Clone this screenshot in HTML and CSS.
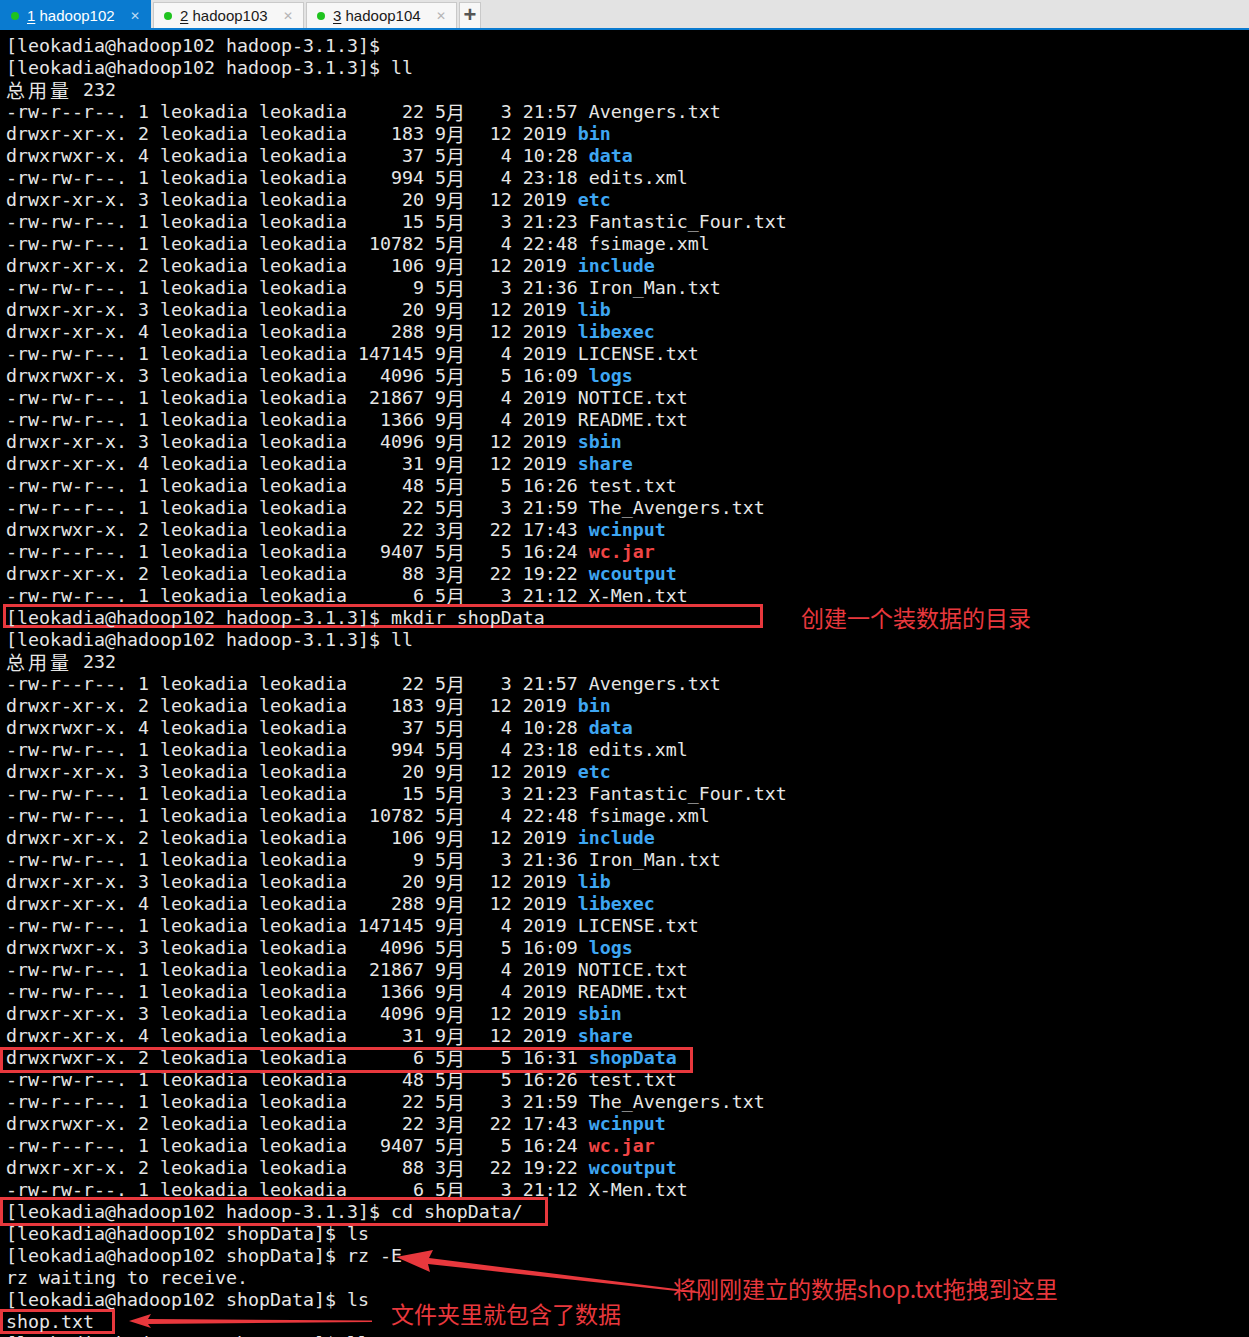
FILE: index.html
```html
<!DOCTYPE html>
<html>
<head>
  <title>Xshell - hadoop102</title>
  <link rel="stylesheet" href="styles.css">
</head>
<body>
  <div class="tabs">
    <div class="tab active"><span class="dot"></span><span class="lbl"><u>1</u> hadoop102</span><span class="x">&#x2715;</span></div>
    <div class="tab"><span class="dot"></span><span class="lbl"><u>2</u> hadoop103</span><span class="x">&#x2715;</span></div>
    <div class="tab"><span class="dot"></span><span class="lbl"><u>3</u> hadoop104</span><span class="x">&#x2715;</span></div>
    <div class="add">+</div>
  </div>

  <div class="term">
<div class="ln">[leokadia@hadoop102 hadoop-3.1.3]$</div>
<div class="ln">[leokadia@hadoop102 hadoop-3.1.3]$ ll</div>
<div class="ln"><span class="w">总</span><span class="w">用</span><span class="w">量</span> 232</div>
<div class="ln">-rw-r--r--. 1 leokadia leokadia     22 5<span class="w">月</span>   3 21:57 Avengers.txt</div>
<div class="ln">drwxr-xr-x. 2 leokadia leokadia    183 9<span class="w">月</span>  12 2019 <span class="d">bin</span></div>
<div class="ln">drwxrwxr-x. 4 leokadia leokadia     37 5<span class="w">月</span>   4 10:28 <span class="d">data</span></div>
<div class="ln">-rw-rw-r--. 1 leokadia leokadia    994 5<span class="w">月</span>   4 23:18 edits.xml</div>
<div class="ln">drwxr-xr-x. 3 leokadia leokadia     20 9<span class="w">月</span>  12 2019 <span class="d">etc</span></div>
<div class="ln">-rw-rw-r--. 1 leokadia leokadia     15 5<span class="w">月</span>   3 21:23 Fantastic_Four.txt</div>
<div class="ln">-rw-rw-r--. 1 leokadia leokadia  10782 5<span class="w">月</span>   4 22:48 fsimage.xml</div>
<div class="ln">drwxr-xr-x. 2 leokadia leokadia    106 9<span class="w">月</span>  12 2019 <span class="d">include</span></div>
<div class="ln">-rw-rw-r--. 1 leokadia leokadia      9 5<span class="w">月</span>   3 21:36 Iron_Man.txt</div>
<div class="ln">drwxr-xr-x. 3 leokadia leokadia     20 9<span class="w">月</span>  12 2019 <span class="d">lib</span></div>
<div class="ln">drwxr-xr-x. 4 leokadia leokadia    288 9<span class="w">月</span>  12 2019 <span class="d">libexec</span></div>
<div class="ln">-rw-rw-r--. 1 leokadia leokadia 147145 9<span class="w">月</span>   4 2019 LICENSE.txt</div>
<div class="ln">drwxrwxr-x. 3 leokadia leokadia   4096 5<span class="w">月</span>   5 16:09 <span class="d">logs</span></div>
<div class="ln">-rw-rw-r--. 1 leokadia leokadia  21867 9<span class="w">月</span>   4 2019 NOTICE.txt</div>
<div class="ln">-rw-rw-r--. 1 leokadia leokadia   1366 9<span class="w">月</span>   4 2019 README.txt</div>
<div class="ln">drwxr-xr-x. 3 leokadia leokadia   4096 9<span class="w">月</span>  12 2019 <span class="d">sbin</span></div>
<div class="ln">drwxr-xr-x. 4 leokadia leokadia     31 9<span class="w">月</span>  12 2019 <span class="d">share</span></div>
<div class="ln">-rw-rw-r--. 1 leokadia leokadia     48 5<span class="w">月</span>   5 16:26 test.txt</div>
<div class="ln">-rw-r--r--. 1 leokadia leokadia     22 5<span class="w">月</span>   3 21:59 The_Avengers.txt</div>
<div class="ln">drwxrwxr-x. 2 leokadia leokadia     22 3<span class="w">月</span>  22 17:43 <span class="d">wcinput</span></div>
<div class="ln">-rw-r--r--. 1 leokadia leokadia   9407 5<span class="w">月</span>   5 16:24 <span class="r">wc.jar</span></div>
<div class="ln">drwxr-xr-x. 2 leokadia leokadia     88 3<span class="w">月</span>  22 19:22 <span class="d">wcoutput</span></div>
<div class="ln">-rw-rw-r--. 1 leokadia leokadia      6 5<span class="w">月</span>   3 21:12 X-Men.txt</div>
<div class="ln mk"><span class="box box-mkdir"></span>[leokadia@hadoop102 hadoop-3.1.3]$ mkdir shopData</div>
<div class="ln">[leokadia@hadoop102 hadoop-3.1.3]$ ll</div>
<div class="ln"><span class="w">总</span><span class="w">用</span><span class="w">量</span> 232</div>
<div class="ln">-rw-r--r--. 1 leokadia leokadia     22 5<span class="w">月</span>   3 21:57 Avengers.txt</div>
<div class="ln">drwxr-xr-x. 2 leokadia leokadia    183 9<span class="w">月</span>  12 2019 <span class="d">bin</span></div>
<div class="ln">drwxrwxr-x. 4 leokadia leokadia     37 5<span class="w">月</span>   4 10:28 <span class="d">data</span></div>
<div class="ln">-rw-rw-r--. 1 leokadia leokadia    994 5<span class="w">月</span>   4 23:18 edits.xml</div>
<div class="ln">drwxr-xr-x. 3 leokadia leokadia     20 9<span class="w">月</span>  12 2019 <span class="d">etc</span></div>
<div class="ln">-rw-rw-r--. 1 leokadia leokadia     15 5<span class="w">月</span>   3 21:23 Fantastic_Four.txt</div>
<div class="ln">-rw-rw-r--. 1 leokadia leokadia  10782 5<span class="w">月</span>   4 22:48 fsimage.xml</div>
<div class="ln">drwxr-xr-x. 2 leokadia leokadia    106 9<span class="w">月</span>  12 2019 <span class="d">include</span></div>
<div class="ln">-rw-rw-r--. 1 leokadia leokadia      9 5<span class="w">月</span>   3 21:36 Iron_Man.txt</div>
<div class="ln">drwxr-xr-x. 3 leokadia leokadia     20 9<span class="w">月</span>  12 2019 <span class="d">lib</span></div>
<div class="ln">drwxr-xr-x. 4 leokadia leokadia    288 9<span class="w">月</span>  12 2019 <span class="d">libexec</span></div>
<div class="ln">-rw-rw-r--. 1 leokadia leokadia 147145 9<span class="w">月</span>   4 2019 LICENSE.txt</div>
<div class="ln">drwxrwxr-x. 3 leokadia leokadia   4096 5<span class="w">月</span>   5 16:09 <span class="d">logs</span></div>
<div class="ln">-rw-rw-r--. 1 leokadia leokadia  21867 9<span class="w">月</span>   4 2019 NOTICE.txt</div>
<div class="ln">-rw-rw-r--. 1 leokadia leokadia   1366 9<span class="w">月</span>   4 2019 README.txt</div>
<div class="ln">drwxr-xr-x. 3 leokadia leokadia   4096 9<span class="w">月</span>  12 2019 <span class="d">sbin</span></div>
<div class="ln">drwxr-xr-x. 4 leokadia leokadia     31 9<span class="w">月</span>  12 2019 <span class="d">share</span></div>
<div class="ln mk"><span class="box box-dir"></span>drwxrwxr-x. 2 leokadia leokadia      6 5<span class="w">月</span>   5 16:31 <span class="d">shopData</span></div>
<div class="ln">-rw-rw-r--. 1 leokadia leokadia     48 5<span class="w">月</span>   5 16:26 test.txt</div>
<div class="ln">-rw-r--r--. 1 leokadia leokadia     22 5<span class="w">月</span>   3 21:59 The_Avengers.txt</div>
<div class="ln">drwxrwxr-x. 2 leokadia leokadia     22 3<span class="w">月</span>  22 17:43 <span class="d">wcinput</span></div>
<div class="ln">-rw-r--r--. 1 leokadia leokadia   9407 5<span class="w">月</span>   5 16:24 <span class="r">wc.jar</span></div>
<div class="ln">drwxr-xr-x. 2 leokadia leokadia     88 3<span class="w">月</span>  22 19:22 <span class="d">wcoutput</span></div>
<div class="ln">-rw-rw-r--. 1 leokadia leokadia      6 5<span class="w">月</span>   3 21:12 X-Men.txt</div>
<div class="ln mk"><span class="box box-cd"></span>[leokadia@hadoop102 hadoop-3.1.3]$ cd shopData/</div>
<div class="ln">[leokadia@hadoop102 shopData]$ ls</div>
<div class="ln">[leokadia@hadoop102 shopData]$ rz -E</div>
<div class="ln">rz waiting to receive.</div>
<div class="ln">[leokadia@hadoop102 shopData]$ ls</div>
<div class="ln mk"><span class="box box-file"></span>shop.txt</div>
<div class="ln">[leokadia@hadoop102 shopData]$ ll</div>

    <div class="note note-mkdir">创建一个装数据的目录</div>
    <div class="note note-drag">将刚刚建立的数据shop.txt拖拽到这里</div>
    <div class="note note-file">文件夹里就包含了数据</div>

    <svg class="arrows" width="1249" height="1307" viewBox="0 0 1249 1307" xmlns="http://www.w3.org/2000/svg">
      <!-- arrow to "rz -E" -->
      <polygon points="396,1227 433,1220 429,1228 700,1262 700,1263.5 428,1234 430,1242" fill="#e8383d"/>
      <!-- arrow to shop.txt -->
      <polygon points="129,1291 151,1284 148,1289 372,1290.5 372,1292 148,1294 151,1298" fill="#e8383d"/>
    </svg>
  </div>
</body>
</html>
```

FILE: styles.css
```css
html, body {
  height: 100%;
  overflow: hidden;
}
body {
  margin: 0;
  background-color: #000;
}
.tabs {
  display: flex;
  align-items: flex-end;
  gap: 2px;
  height: 28px;
  background-color: #e3e3e3;
  border-bottom: 2px solid #0a7bd0;
  font-family: "Liberation Sans", Arial, sans-serif;
  font-size: 15px;
}
.tab {
  display: flex;
  align-items: center;
  width: 151px;
  height: 26px;
  box-sizing: border-box;
  padding: 0 0 0 10px;
  background-color: #f7f7f7;
  border: 1px solid #c9c9c9;
  border-bottom: none;
  color: #1a1a1a;
}
.tab.active {
  height: 28px;
  padding-top: 2px;
  background-color: #0a7bd0;
  border-color: #0a7bd0;
  color: #fff;
}
.dot {
  width: 8px;
  height: 8px;
  border-radius: 50%;
  background-color: #1fc31f;
  margin-right: 8px;
}
.lbl u {
  text-decoration-thickness: 1px;
  text-underline-offset: 2px;
}
.x {
  margin-left: auto;
  margin-right: 10px;
  font-size: 12px;
  color: #b5b5b5;
}
.tab.active .x {
  color: #bcd9f2;
}
.add {
  width: 22px;
  height: 26px;
  box-sizing: border-box;
  background-color: #f7f7f7;
  border: 1px solid #c9c9c9;
  border-bottom: none;
  color: #555;
  font-size: 22px;
  font-weight: bold;
  line-height: 24px;
  text-align: center;
}
.term {
  position: relative;
  padding: 5px 0 0 6px;
  font-family: "DejaVu Sans Mono", monospace;
  font-size: 18.27px;
  color: #e6e6e6;
}
.ln {
  height: 22px;
  line-height: 22px;
  white-space: pre;
}
.w {
  display: inline-block;
  vertical-align: top;
  width: 22px;
  font-family: "Noto Sans CJK SC", sans-serif;
  font-size: 19px;
  line-height: 21px;
}
.d {
  color: #3ea6f2;
  font-weight: bold;
}
.r {
  color: #f04545;
  font-weight: bold;
}
.mk {
  position: relative;
  z-index: 1;
}
.box {
  position: absolute;
  z-index: -1;
  box-sizing: border-box;
  background-color: #000;
  border: 3px solid #e8383d;
}
.box-mkdir {
  left: -3px;
  top: -3px;
  width: 760px;
  height: 24px;
}
.box-dir {
  left: -6px;
  top: 0;
  width: 693px;
  height: 26px;
}
.box-cd {
  left: -6px;
  top: -4px;
  width: 548px;
  height: 29px;
}
.box-file {
  left: -6px;
  top: -2px;
  width: 115px;
  height: 25px;
}
.note {
  position: absolute;
  font-family: "Noto Sans CJK SC", sans-serif;
  font-size: 23px;
  line-height: 26px;
  color: #e8383d;
  white-space: nowrap;
  z-index: 2;
}
.note-mkdir {
  left: 801px;
  top: 574px;
}
.note-drag {
  left: 673px;
  top: 1245px;
}
.note-file {
  left: 391px;
  top: 1270px;
}
.arrows {
  position: absolute;
  left: 0;
  top: 0;
  z-index: 2;
}
```
